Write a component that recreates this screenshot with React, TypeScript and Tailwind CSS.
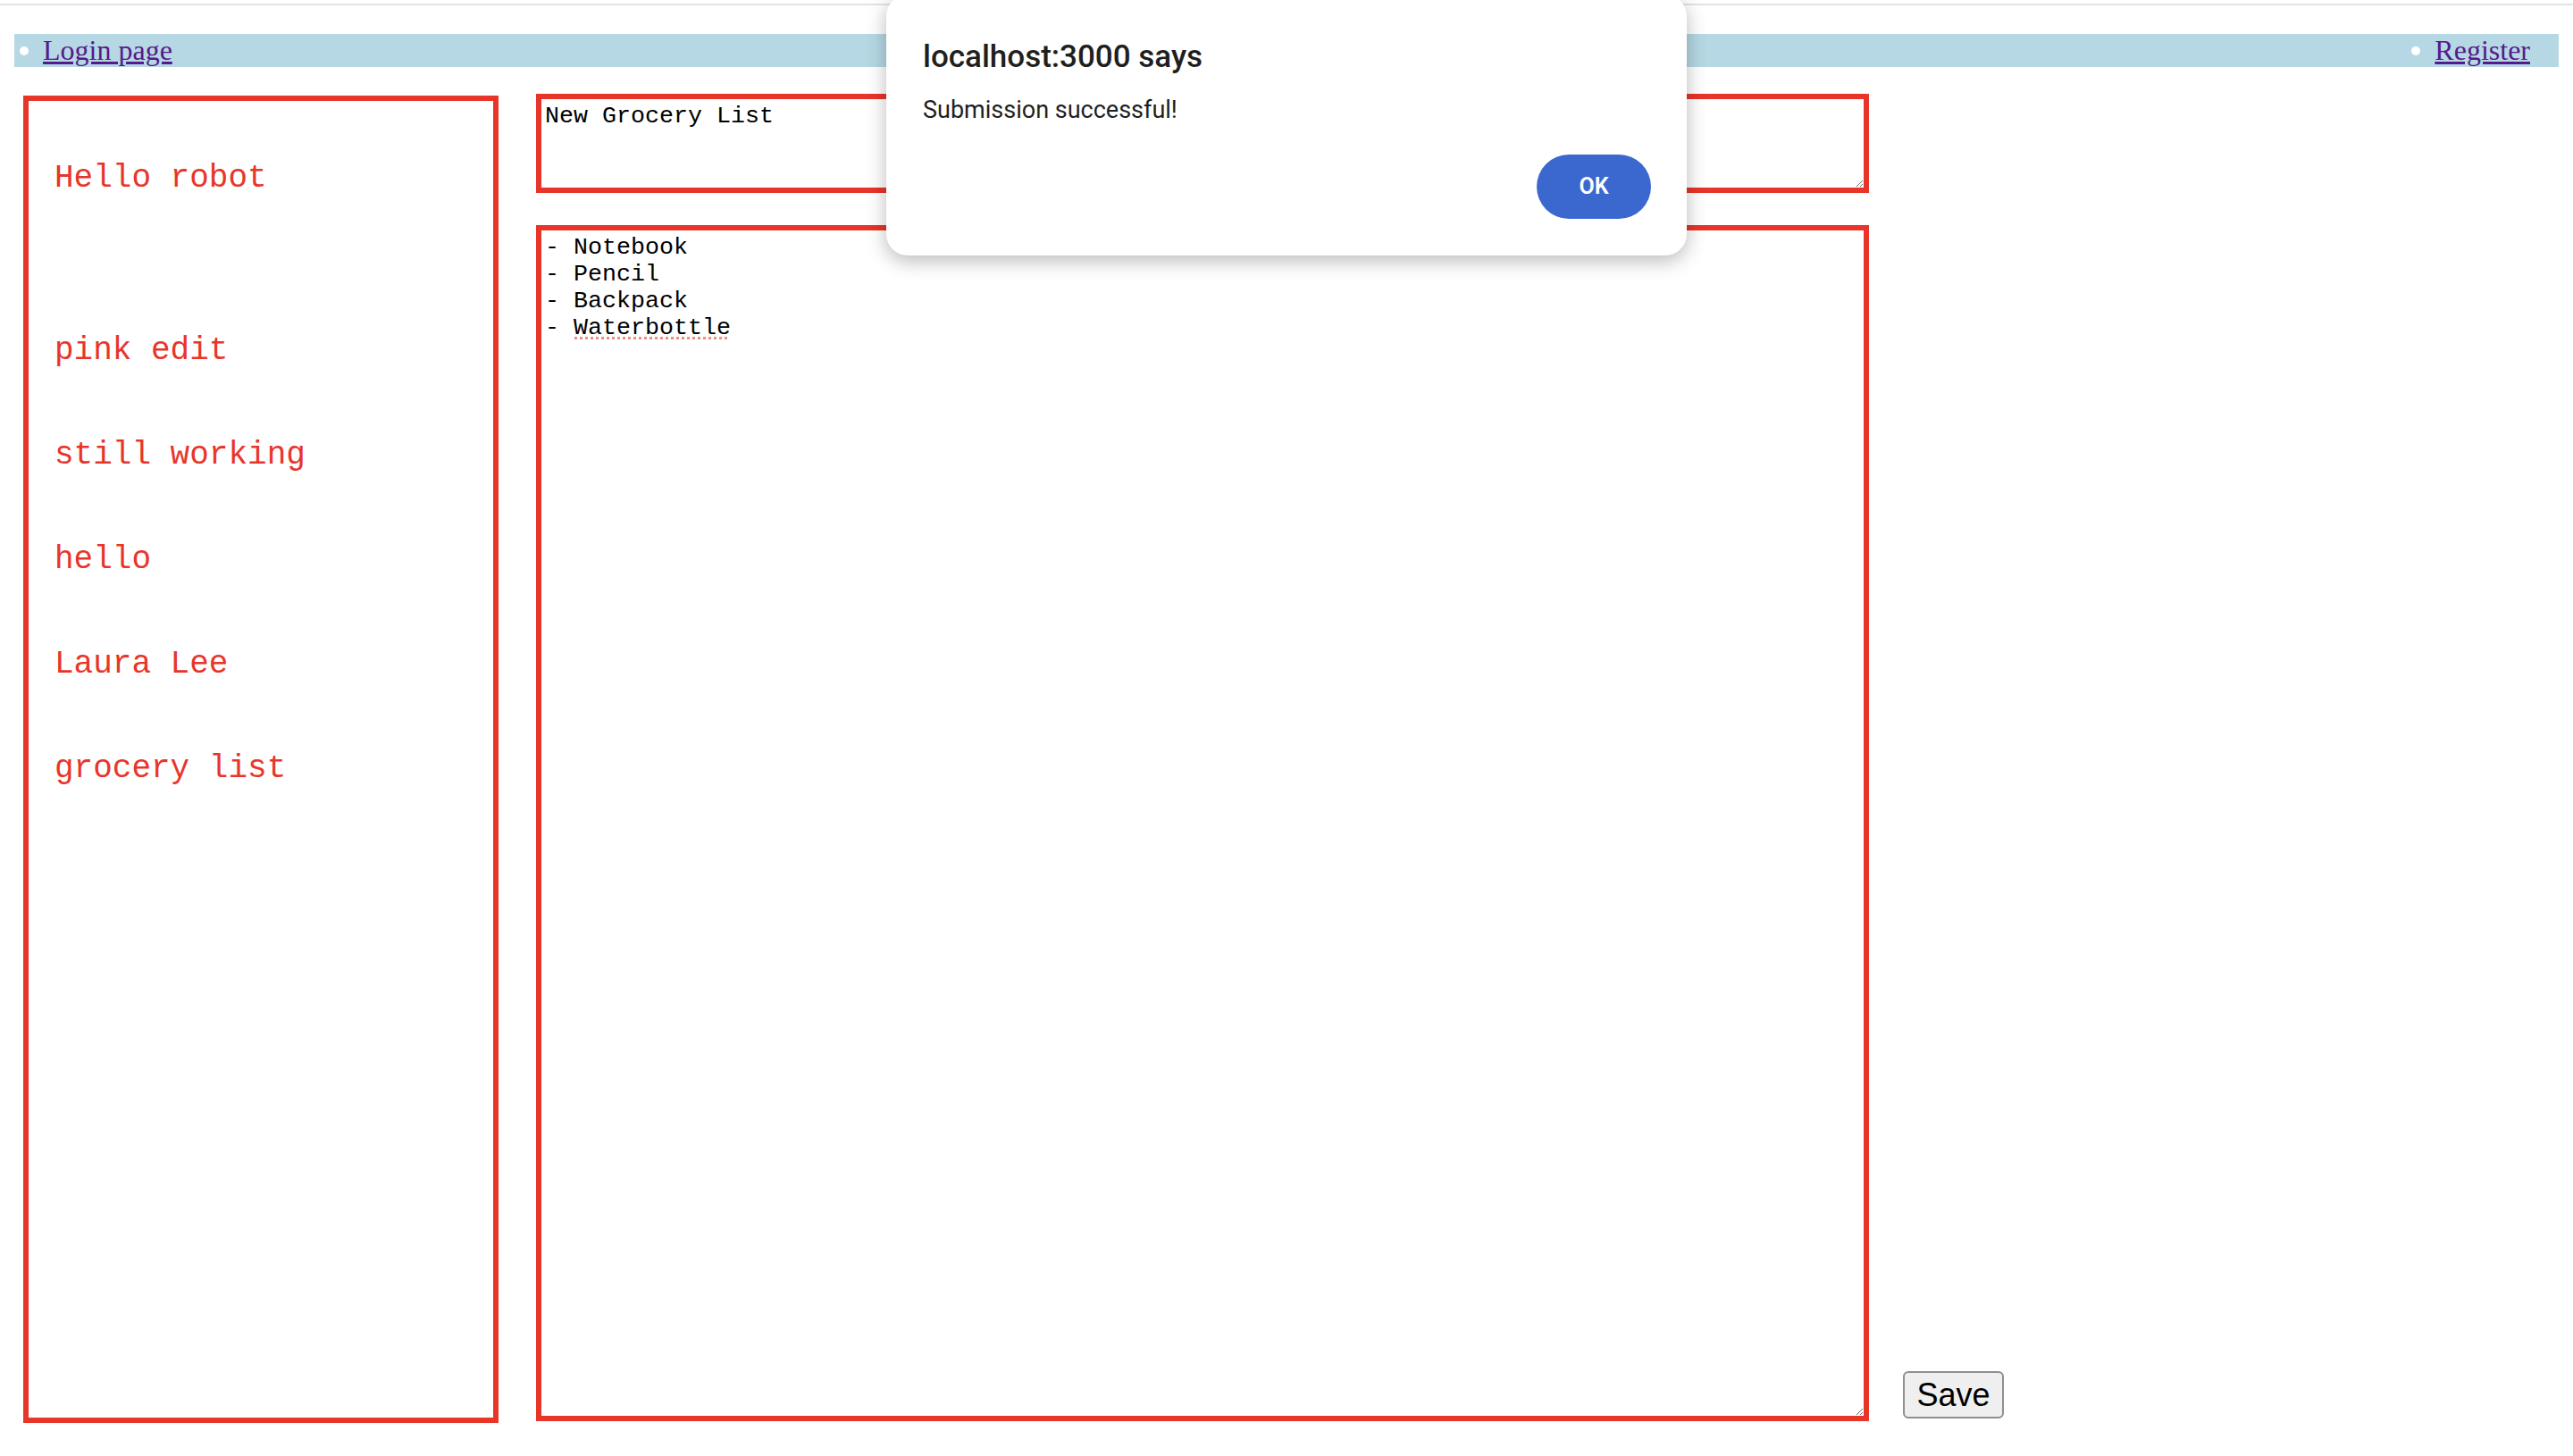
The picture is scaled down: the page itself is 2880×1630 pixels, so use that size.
import { useState } from "react";

const notes = ["Hello robot", "", "pink edit", "still working", "hello", "Laura Lee", "grocery list"];

export default function App() {
  const [title, setTitle] = useState("New Grocery List");
  const [body, setBody] = useState("- Notebook\n- Pencil\n- Backpack\n- Waterbottle");

  return (
    <div className="relative h-[1630px] w-[2880px] bg-white overflow-hidden">
      {/* browser chrome edge */}
      <div className="mt-[4px] h-[2px] bg-[#e2e2e2]" />

      <div className="px-[16px]">
        <ul className="mt-[32px] flex h-[37px] items-center justify-between bg-[#b6d8e4] pl-[6px] pr-[32px] font-['Liberation_Serif',serif] text-[32px] leading-[37px]">
          <li className="flex items-center gap-[16px]">
            <span className="h-[10px] w-[10px] rounded-full bg-white" />
            <a href="#" className="text-[#551a8b] underline">
              Login page
            </a>
          </li>
          <li className="flex items-center gap-[16px]">
            <span className="h-[10px] w-[10px] rounded-full bg-white" />
            <a href="#" className="text-[#551a8b] underline">
              Register
            </a>
          </li>
        </ul>

        <div className="mt-[30px] flex items-start">
          <div className="ml-[10px] mt-[2px] flex h-[1486px] w-[532px] flex-col gap-[76px] border-[6px] border-[#e8352a] pl-[29px] pt-[66px] font-['Liberation_Mono',monospace] text-[36px] leading-[41px] text-[#e8352a]">
            {notes.map((n, i) => (
              <div key={i} className={n ? "h-[41px]" : "h-0"}>
                {n}
              </div>
            ))}
          </div>

          <div className="ml-[42px] flex flex-col">
            <textarea
              value={title}
              onChange={(e) => setTitle(e.target.value)}
              spellCheck={false}
              className="block h-[111px] w-[1492px] border-[6px] border-[#e8352a] p-[4px] font-['Liberation_Mono',monospace] text-[26.67px] leading-[30px] text-black outline-none"
            />
            <div className="mt-[36px] flex items-end">
              <div className="relative">
                <textarea
                  value={body}
                  onChange={(e) => setBody(e.target.value)}
                  spellCheck={false}
                  className="block h-[1339px] w-[1492px] border-[6px] border-[#e8352a] p-[4px] font-['Liberation_Mono',monospace] text-[26.67px] leading-[30px] text-black outline-none"
                />
                {/* spellcheck squiggle */}
                <div className="pointer-events-none absolute left-[43px] top-[125px] w-[171px] border-t-[3px] border-dotted border-[#f28b82]" />
              </div>
              <button className="mb-[3px] ml-[38px] h-[53px] w-[113px] rounded-[6px] border-[2px] border-[#8f8f8f] bg-[#efefef] font-['Liberation_Sans',sans-serif] text-[36px] leading-none text-black">
                Save
              </button>
            </div>
          </div>
        </div>
      </div>

      {/* alert dialog */}
      <div className="absolute left-[992px] top-[-6px] flex h-[292px] w-[896px] flex-col rounded-[24px] bg-white pl-[41px] pr-[40px] pt-[49px] font-['Roboto',sans-serif] shadow-[0_6px_22px_rgba(0,0,0,0.28)]">
        <div className="text-[35px] font-medium leading-[42px] text-[#1f1f1f]">localhost:3000 says</div>
        <div className="mt-[22px] text-[27px] leading-[32px] text-[#1f1f1f]">Submission successful!</div>
        <div className="mt-[34px] flex justify-end">
          <button className="h-[72px] w-[128px] rounded-full bg-[#3b68ce] text-[25px] font-semibold text-white">OK</button>
        </div>
      </div>
    </div>
  );
}
